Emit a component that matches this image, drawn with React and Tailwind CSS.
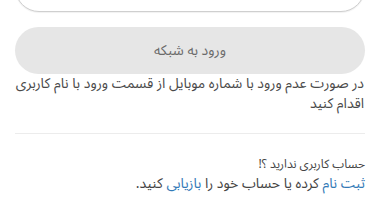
import React from 'react';

const App = () => {
  return (
    <div dir="rtl" className="w-[380px] h-[220px] overflow-hidden bg-white" style={{ fontFamily: '"Noto Sans Arabic", sans-serif' }}>
      <div className="px-[15px] -mt-[36px]">
        <div className="h-[48px] rounded-full border border-[#cfcfcf] bg-white shadow-[0_1px_1px_rgba(0,0,0,0.06)]" />
        <button className="mt-[15px] w-full h-[47px] rounded-full bg-[#e6e6e6] text-[14px] text-[#6b6b6b]">
          ورود به شبکه
        </button>
        <p className="text-[14px] leading-[20px] text-[#4a4a4a] pr-[1px]">
          در صورت عدم ورود با شماره موبایل از قسمت ورود با نام کاربری اقدام کنید
        </p>
        <div className="mt-[19px] border-t border-[#ececec]" />
        <div className="mt-[23px] text-[12px] leading-[16px] text-[#444]">حساب کاربری ندارید ؟!</div>
        <div className="mt-[1px] text-[14px] leading-[20px] text-[#444]">
          <a className="text-[#337ab7]">ثبت نام</a> کرده یا حساب خود را <a className="text-[#337ab7]">بازیابی</a> کنید.
        </div>
      </div>
    </div>
  );
};

export default App;
